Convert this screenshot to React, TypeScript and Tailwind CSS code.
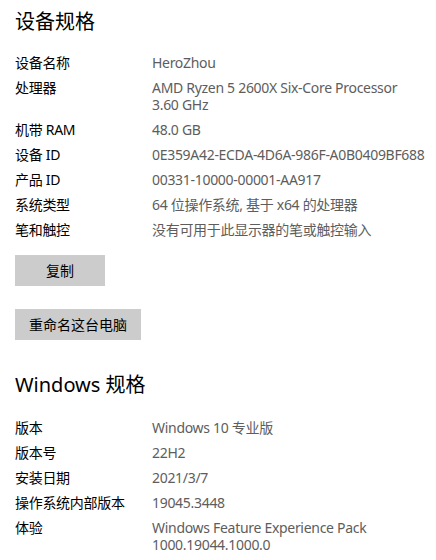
const FONT = "font-['Noto_Sans','Noto_Sans_CJK_SC',sans-serif]"

type Spec = { label: string; value: string[] }

const DEVICE_SPECS: Spec[] = [
  { label: "设备名称", value: ["HeroZhou"] },
  { label: "处理器", value: ["AMD Ryzen 5 2600X Six-Core Processor", "3.60 GHz"] },
  { label: "机带 RAM", value: ["48.0 GB"] },
  { label: "设备 ID", value: ["0E359A42-ECDA-4D6A-986F-A0B0409BF688"] },
  { label: "产品 ID", value: ["00331-10000-00001-AA917"] },
  { label: "系统类型", value: ["64 位操作系统, 基于 x64 的处理器"] },
  { label: "笔和触控", value: ["没有可用于此显示器的笔或触控输入"] },
]

const WINDOWS_SPECS: Spec[] = [
  { label: "版本", value: ["Windows 10 专业版"] },
  { label: "版本号", value: ["22H2"] },
  { label: "安装日期", value: ["2021/3/7"] },
  { label: "操作系统内部版本", value: ["19045.3448"] },
  { label: "体验", value: ["Windows Feature Experience Pack", "1000.19044.1000.0"] },
]

const SpecTable = ({ specs }: { specs: Spec[] }) => (
  <div className="flex flex-col gap-2">
    {specs.map((s) => (
      <div key={s.label} className="flex text-[14px] leading-[17px] tracking-[-0.3px]">
        <div className="w-[137px] shrink-0 text-black">{s.label}</div>
        <div className="whitespace-nowrap text-[#5d5d5d]">
          {s.value.map((v) => (
            <div key={v} className="h-[17px]">{v}</div>
          ))}
        </div>
      </div>
    ))}
  </div>
)

const GrayButton = ({ children, width }: { children: string; width: string }) => (
  <button className={`${width} h-[31px] bg-[#cccccc] text-[14px] text-black`}>{children}</button>
)

export default function App() {
  return (
    <div className={`${FONT} h-[560px] w-[436px] overflow-hidden bg-white pl-[15px] pt-[10px]`}>
      <h2 className="h-[24px] text-[20px] leading-[24px] text-black">设备规格</h2>

      <div className="mt-[20px]">
        <SpecTable specs={DEVICE_SPECS} />
      </div>

      <div className="mt-[17px] flex flex-col items-start gap-[23px]">
        <GrayButton width="w-[90px]">复制</GrayButton>
        <GrayButton width="w-[126px]">重命名这台电脑</GrayButton>
      </div>

      <h2 className="mt-[33px] h-[24px] text-[20px] leading-[24px] text-black">Windows 规格</h2>

      <div className="mt-[22px]">
        <SpecTable specs={WINDOWS_SPECS} />
      </div>
    </div>
  )
}
